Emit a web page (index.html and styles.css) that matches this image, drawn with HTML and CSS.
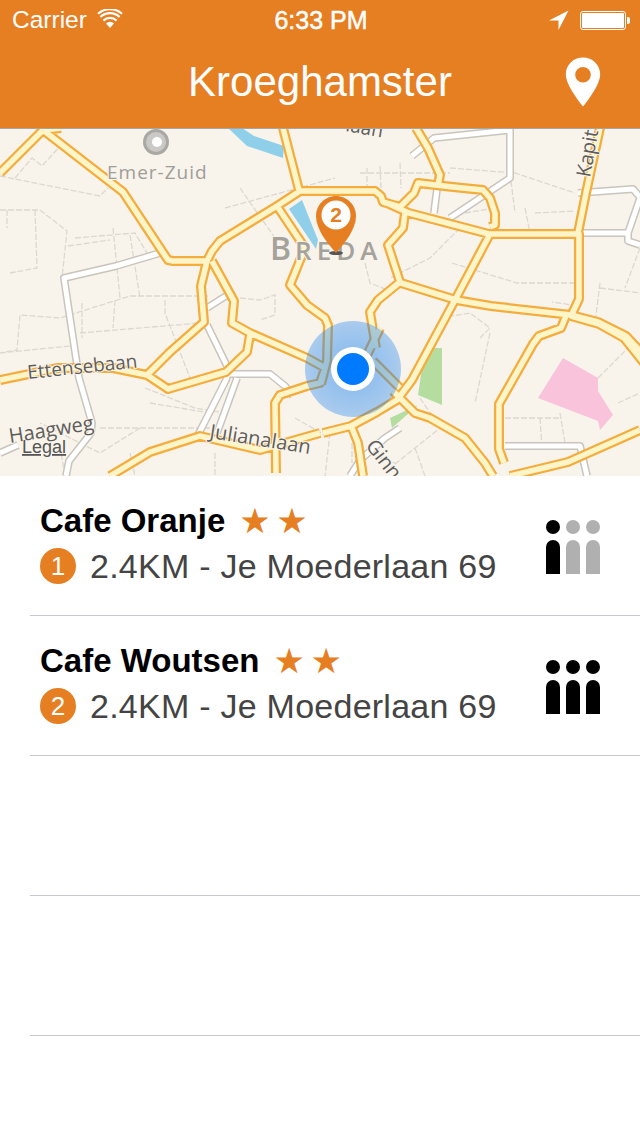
FILE: index.html
```html
<!DOCTYPE html>
<html lang="nl">
<head>
<meta charset="utf-8">
<title>Kroeghamster</title>
<link rel="stylesheet" href="styles.css">
</head>
<body>
<div class="app">
  <header class="top">
    <div class="status">
      <div class="status-left">
        <span>Carrier</span>
        <svg class="wifi" width="26" height="20" viewBox="0 0 26 20"><path d="M13 19l-4-4.600a6 6 0 0 1 8 0z" fill="#fff"/><path d="M6.400 11.600a9.600 9.600 0 0 1 13.200 0M3.400 8a14 14 0 0 1 19.200 0M1 4.800a18 18 0 0 1 24 0" fill="none" stroke="#fff" stroke-width="2.200"/></svg>
      </div>
      <div class="status-time">6:33 PM</div>
      <div class="status-right">
        <svg width="20" height="20" viewBox="0 0 20 20"><path d="M19.500 .5L0 10.500h9.500v9.500z" fill="#fff"/></svg>
        <div class="battery"><div class="battery-fill"></div></div>
        <div class="battery-tip"></div>
      </div>
    </div>
    <nav class="nav">
      <span></span>
      <h1 class="title">Kroeghamster</h1>
      <svg class="nav-pin" width="36" height="50" viewBox="0 0 36 50"><path fill-rule="evenodd" d="M18 .5C8.300.5.800 8 .8 17.500c0 9 10 23 17.200 32 7.200-9 17.200-23 17.200-32C35.200 8 27.700.5 18 .5zm0 9.500a7.800 7.800 0 1 1 0 15.600 7.800 7.800 0 0 1 0-15.600z" fill="#fff"/></svg>
    </nav>
  </header>

  <div class="map">
    <svg class="map-svg" width="640" height="348" viewBox="0 0 640 348">
      <defs>
        <radialGradient id="pulse-fill">
          <stop offset="0" stop-color="#0a78f0" stop-opacity=".5"/>
          <stop offset="1" stop-color="#0a78f0" stop-opacity=".33"/>
        </radialGradient>
      </defs>
      <rect width="640" height="348" fill="#f8f4ec"/>
      <g class="parks">
        <path d="M228 0h14l12 8 30 10-1 12-36-12z" fill="#8fcfe9"/>
        <path d="M289 81l13-9 16 40-2 9z" fill="#8fcfe9"/>
        <path d="M433 220h9v57l-24-10 5-34z" fill="#b5dda0"/>
        <path d="M390 290l28-13-26 23z" fill="#b5dda0"/>
        <path d="M563 230l35 20v13l15 24-13 15-2-9-60-23z" fill="#f9c3db"/>
      </g>
      <g class="minor">
        <path d="M0 48l100 20 8-8M15 50l17-20 10 8 20-22M0 82h40l27 21-5 47M7 82v18M35 82l2 58-27 5M75 110l60-5 15 25M113 100l7 70M130 107l10 63M68 118l42-6M208 168h-78l-70 22-40-3-3 35-17 3M82 175v35M115 172l-2 28M80 205l120-10M165 172v13l25 65M0 225l70-7M240 170l20 2 15-5 0 20-15 5M145 260l50 20 30 5M150 275l60 10M140 300l-40 25-60-30M100 300h110M130 325l5 23M215 325v23M60 318l5 30M330 305l-5 43M295 290l35 20M355 320l40 15M225 80l110-30M240 60l35 50M360 45h90M367 40v20M380 38l1 22M400 35l1 25M450 40l65 5 60 20M510 45l5 40M465 85l30-5M525 80l5 25M535 85l40-2M460 100l-30 30-40 20M452 135l65 20h65l-10 22-20-3M365 135l5 20 25 10M352 315v20M440 190l30-5 20 15-10 10M490 205l-15 70M540 290l2 30M560 285l5 30M505 290h55M600 155l-5 40M640 120l-15 40M600 160l40 5M598 250l32-32M618 275l22-10M420 270l20 30-50 40M415 320l10 28" />
      </g>
      <g class="white-casing">
        <path d="M160 125l-44 13-52 12 15 100 13 45-1 10-22 28-3 15M0 325l18-8M207 197l22 45-3 10-28 55M207 180l22-14M230 246h40l15 12 8 10M237 250l-20 55M412 28l22-18 76-8v48l-60 40M434 85l5-40M578 65l55-4 7 8M578 105h50l12-35M628 105v8l12 4M505 318h75l7 30M400 300l-15 10-25 22-10 16" />
      </g>
      <g class="white-road">
        <path d="M160 125l-44 13-52 12 15 100 13 45-1 10-22 28-3 15M0 325l18-8M207 197l22 45-3 10-28 55M207 180l22-14M230 246h40l15 12 8 10M237 250l-20 55M412 28l22-18 76-8v48l-60 40M434 85l5-40M578 65l55-4 7 8M578 105h50l12-35M628 105v8l12 4M505 318h75l7 30M400 300l-15 10-25 22-10 16" />
      </g>
      <g class="road-casing">
        <path d="M0 45l25-25L43 2l80 62 45 68 5 1h34M207 133l5-10 8-10 57-35 23-15h75l6 5 2 6 17 5 14-14 4-10 35 4 30 3 7 8 5 15v12l-5 2M43 2l18-2M283 0l16 62M277 78l28 42-15 37 17 20 18 13 3 7-1 36 -6 23M389 76l20 9 80 21h90v65l-8 17 28 8 25 14 20 25 22 60M207 133l-6 25 3 36-34 30-23 23 21 14 58-17 21-20 3-17M212 133l22 40-2 22 18 10 57 25 18 10-5 15-13 3-27 9-5 8 1 70M147 247l-34-7h-55L0 252M405 85l-2 15-15 17 12 37-22 18-8 12 5 30 1 6M401 155l55 17 35 6 80 9 27 7 28 14 17 18 22 60M490 106l-35 66-43 80-15 20-20 12-26 14-28 7M352 300l6 15 5 33M393 263l22 22 15 5 35 20 20 25 8 13M510 348l58-14 72-32M566 188l-5 12-22 8-6 8-34 60v45l5 14M110 348l40-24 50-16 60 14 60-17M416 0l12 20 12 27-2 10M578 105l8-40 14-65M380 200l-13 27M373 233l27 27" />
      </g>
      <g class="road-fill">
        <path d="M0 45l25-25L43 2l80 62 45 68 5 1h34M207 133l5-10 8-10 57-35 23-15h75l6 5 2 6 17 5 14-14 4-10 35 4 30 3 7 8 5 15v12l-5 2M43 2l18-2M283 0l16 62M277 78l28 42-15 37 17 20 18 13 3 7-1 36 -6 23M389 76l20 9 80 21h90v65l-8 17 28 8 25 14 20 25 22 60M207 133l-6 25 3 36-34 30-23 23 21 14 58-17 21-20 3-17M212 133l22 40-2 22 18 10 57 25 18 10-5 15-13 3-27 9-5 8 1 70M147 247l-34-7h-55L0 252M405 85l-2 15-15 17 12 37-22 18-8 12 5 30 1 6M401 155l55 17 35 6 80 9 27 7 28 14 17 18 22 60M490 106l-35 66-43 80-15 20-20 12-26 14-28 7M352 300l6 15 5 33M393 263l22 22 15 5 35 20 20 25 8 13M510 348l58-14 72-32M566 188l-5 12-22 8-6 8-34 60v45l5 14M110 348l40-24 50-16 60 14 60-17M416 0l12 20 12 27-2 10M578 105l8-40 14-65M380 200l-13 27M373 233l27 27" />
      </g>
      <circle cx="156" cy="14" r="13" fill="#aaa8a4"/>
      <circle cx="156" cy="14" r="10" fill="#cbc9c5"/>
      <circle cx="157" cy="14" r="5" fill="#fff"/>
      <text class="label label-place" x="107" y="51">Emer-Zuid</text>
      <text class="label label-city" x="270" y="132">B<tspan class="label-city-sm" dx="4">R</tspan><tspan class="label-city-sm" dx="5">E</tspan><tspan class="label-city-sm" dx="5">D</tspan><tspan class="label-city-sm" dx="5">A</tspan></text>
      <text class="label label-road" transform="translate(28 251) rotate(-6)">Ettensebaan</text>
      <text class="label label-road label-lg" transform="translate(10 315) rotate(-9)">Haagweg</text>
      <text class="label label-road label-lg" transform="translate(209 310) rotate(9)">Julianalaan</text>
      <text class="label label-road label-lg" transform="translate(365 318) rotate(52)">Ginn</text>
      <text class="label label-road label-lg" transform="translate(590 50) rotate(-80)">Kapit</text>
      <text class="label label-road" transform="translate(345 3) rotate(10)">laan</text>
      <text class="legal" x="22" y="325">Legal</text>
      <circle class="pulse" cx="353" cy="241" r="48"/>
      <circle cx="353" cy="241" r="22" fill="#fff"/>
      <circle cx="353" cy="241" r="16" fill="#007aff"/>
      <ellipse cx="336" cy="125" rx="7" ry="2" fill="#555"/>
      <path d="M336 68c-11 0-20 9-20 20 0 13 11 27 20 37 9-10 20-24 20-37 0-11-9-20-20-20z" fill="#e67e22"/>
      <circle cx="336" cy="87" r="14.500" fill="#fff"/>
      <text class="pin-num" x="336" y="94" text-anchor="middle">2</text>
    </svg>
  </div>

  <ul class="list">
    <li class="row">
      <div class="row-text">
        <div class="row-name"><span>Cafe Oranje</span><span class="stars">★★</span></div>
        <div class="row-sub"><span class="badge">1</span><span>2.4KM - Je Moederlaan 69</span></div>
      </div>
      <div class="people">
        <div class="person"><i class="head"></i><i class="body"></i></div>
        <div class="person off"><i class="head"></i><i class="body"></i></div>
        <div class="person off"><i class="head"></i><i class="body"></i></div>
      </div>
    </li>
    <li class="row">
      <div class="row-text">
        <div class="row-name"><span>Cafe Woutsen</span><span class="stars">★★</span></div>
        <div class="row-sub"><span class="badge">2</span><span>2.4KM - Je Moederlaan 69</span></div>
      </div>
      <div class="people">
        <div class="person"><i class="head"></i><i class="body"></i></div>
        <div class="person"><i class="head"></i><i class="body"></i></div>
        <div class="person"><i class="head"></i><i class="body"></i></div>
      </div>
    </li>
    <li class="row"></li>
    <li class="row"></li>
  </ul>
</div>
</body>
</html>
```
FILE: styles.css
```css
* { box-sizing: border-box; }
html, body { margin: 0; padding: 0; }
body { background: #fff; font-family: "Liberation Sans", Arial, sans-serif; color: #000; }
.app { width: 640px; height: 1136px; overflow: hidden; display: flex; flex-direction: column; }

.top { background: #e67e22; color: #fff; height: 128px; flex: none; }
.status { height: 40px; display: grid; grid-template-columns: 1fr auto 1fr; align-items: center; padding: 0 10px 0 12px; font-size: 24.500px; }
.status-left { display: flex; align-items: center; gap: 10px; }
.wifi { margin-top: -2px; }
.status-time { font-size: 25px; font-weight: 400; -webkit-text-stroke: .5px #fff; }
.status-right { display: flex; align-items: center; justify-content: flex-end; }
.battery { width: 46px; height: 19px; margin-left: 11px; border: 1px solid #fff; border-radius: 3px; padding: 1px; }
.battery-fill { width: 100%; height: 100%; background: #fff; border-radius: 1px; }
.battery-tip { width: 3px; height: 7px; background: #fff; border-radius: 0 2px 2px 0; margin-left: 1px; }

.nav { height: 88px; display: grid; grid-template-columns: 1fr auto 1fr; align-items: center; padding-right: 39px; }
.title { margin: -4px 0 0; font-size: 42px; font-weight: 400; line-height: 1; padding-left: 39px; }
.nav-pin { justify-self: end; margin-top: -4px; }

.map { height: 348px; flex: none; border-top: 1px solid #a8a6a2; overflow: hidden; }
.map-svg { display: block; margin-top: -1px; }
.minor path { fill: none; stroke: #dcd8d0; stroke-width: 1.300; stroke-dasharray: 6 2; }
.white-casing path { fill: none; stroke: #c9c5bc; stroke-width: 8; stroke-linejoin: round; }
.white-road path { fill: none; stroke: #fff; stroke-width: 5; stroke-linejoin: round; }
.road-casing path { fill: none; stroke: #f4ad3d; stroke-width: 10; stroke-linejoin: round; }
.road-fill path { fill: none; stroke: #fff5c8; stroke-width: 5.500; stroke-linejoin: round; }
.label { font-family: "Open Sans", sans-serif; paint-order: stroke; stroke: #f8f4ec; stroke-width: 2px; }
.label-place { font-size: 19px; fill: #a09d98; letter-spacing: 1px; }
.label-city { font-size: 32px; font-weight: 600; fill: #a5a29c; }
.label-city-sm { font-size: 26px; }
.label-road { font-size: 19px; fill: #5f5d5a; }
.label-lg { font-size: 20px; }
.legal { font-family: "Liberation Sans", sans-serif; font-size: 18px; fill: #555; text-decoration: underline; }
.pulse { fill: url(#pulse-fill); }
.pin-num { font-family: "Liberation Sans", sans-serif; font-size: 21px; font-weight: 700; fill: #e67e22; }

.list { list-style: none; margin: 0; padding: 0; flex: 1; }
.row { height: 140px; margin-left: 30px; padding: 0 40px 0 10px; border-bottom: 1px solid #c8c7cc; display: flex; justify-content: space-between; align-items: center; }
.row-text { display: flex; flex-direction: column; gap: 5px; margin-top: -4px; }
.row-name { font-size: 33px; font-weight: 700; line-height: 40px; display: flex; align-items: center; gap: 14px; }
.stars { color: #e67e22; font-family: "DejaVu Sans", sans-serif; font-size: 35px; font-weight: 400; line-height: 40px; letter-spacing: 5.700px; }
.row-sub { display: flex; align-items: center; gap: 14px; font-size: 34px; letter-spacing: .25px; line-height: 40px; color: #444; }
.badge { width: 36px; height: 36px; border-radius: 50%; background: #e67e22; color: #fff; font-size: 26px; letter-spacing: 0; line-height: 36px; text-align: center; }
.people { display: flex; gap: 6px; margin-top: 2px; }
.person { display: flex; flex-direction: column; align-items: center; gap: 6px; width: 14px; }
.head { width: 14px; height: 14px; border-radius: 50%; background: #000; }
.body { width: 14px; height: 34px; border-radius: 7px 7px 0 0; background: #000; }
.off .head, .off .body { background: #b0b0b0; }
```
